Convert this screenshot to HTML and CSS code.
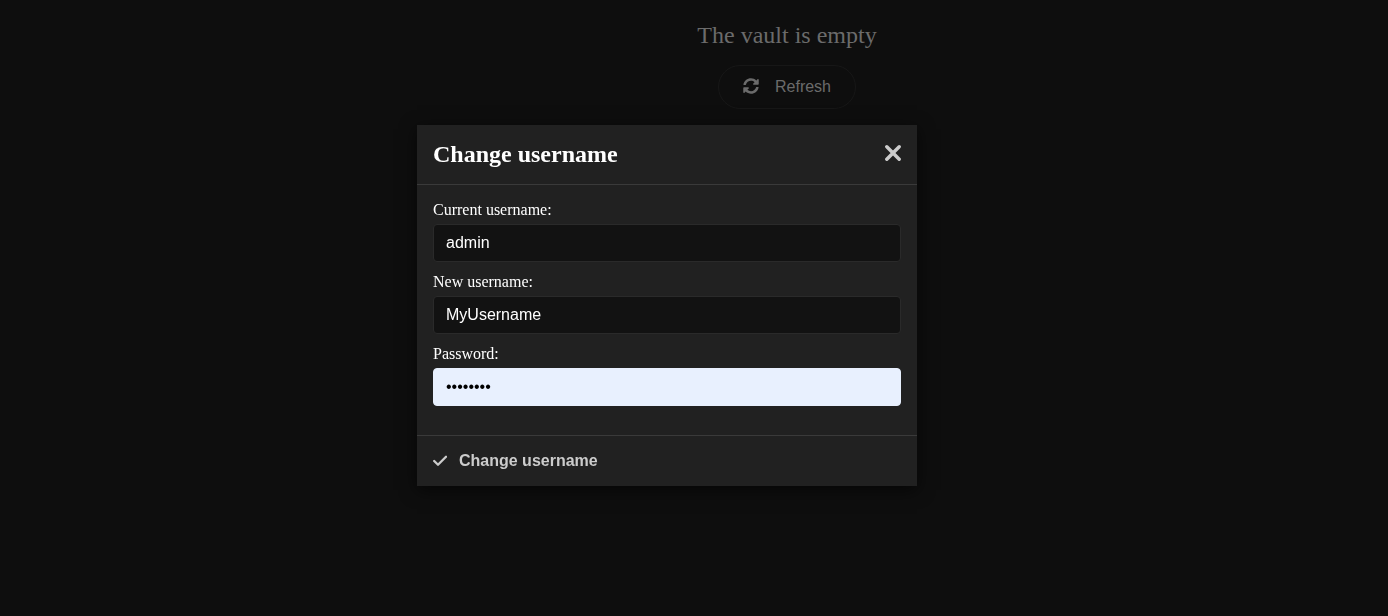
FILE: index.html
```html
<!DOCTYPE html>
<html lang="en">
<head>
<meta charset="utf-8">
<meta name="viewport" content="width=device-width, initial-scale=1">
<title>Vault</title>
<link rel="stylesheet" href="styles.css">
</head>
<body>
<main class="page">
  <h1 class="page-title">The vault is empty</h1>
  <button class="refresh" type="button">
    <svg class="refresh-icon" viewBox="0 0 512 512" aria-hidden="true"><path d="M370.72 133.28C339.458 104.008 298.888 87.962 255.848 88c-77.458.068-144.328 53.178-162.791 126.85-1.344 5.363-6.122 9.15-11.651 9.15H24.103c-7.498 0-13.194-6.807-11.807-14.176C33.933 94.924 134.813 8 256 8c66.448 0 126.791 26.136 171.315 68.685L463.03 40.97C478.149 25.851 504 36.559 504 57.941V192c0 13.255-10.745 24-24 24H345.941c-21.382 0-32.09-25.851-16.971-40.971l41.75-41.749zM32 296h134.059c21.382 0 32.09 25.851 16.971 40.971l-41.75 41.75c31.262 29.273 71.835 45.319 114.876 45.28 77.418-.07 144.315-53.144 162.787-126.849 1.344-5.363 6.122-9.15 11.651-9.15h57.304c7.498 0 13.194 6.807 11.807 14.176C478.067 417.076 377.187 504 256 504c-66.448 0-126.791-26.136-171.315-68.685L48.97 471.03C33.851 486.149 8 475.441 8 454.059V320c0-13.255 10.745-24 24-24z"/></svg>
    Refresh
  </button>
</main>
<div class="overlay">
  <form class="modal" role="dialog" aria-labelledby="modal-title">
    <header class="modal-header">
      <h2 class="modal-title" id="modal-title">Change username</h2>
      <button class="close" type="button" aria-label="Close">
        <svg class="close-icon" viewBox="0 0 20 20" aria-hidden="true"><path d="M3.8 3.8l12.400 12.400M16.200 3.800l-12.400 12.400"/></svg>
      </button>
    </header>
    <div class="modal-body">
      <div class="field">
        <label class="label" for="current">Current username:</label>
        <input class="input" id="current" type="text" value="admin" readonly>
      </div>
      <div class="field">
        <label class="label" for="new">New username:</label>
        <input class="input" id="new" type="text" value="MyUsername">
      </div>
      <div class="field">
        <label class="label" for="password">Password:</label>
        <input class="input input-filled" id="password" type="password" value="password">
      </div>
    </div>
    <footer class="modal-footer">
      <button class="submit" type="submit">
        <svg class="submit-icon" viewBox="0 0 14 16" aria-hidden="true"><path d="M1.200 8l3.800 3.800L13 3.800"/></svg>
        Change username
      </button>
    </footer>
  </form>
</div>
</body>
</html>
```
FILE: styles.css
```css
* {
  box-sizing: border-box;
}

body {
  margin: 0;
  background: #0e0e0e;
  color: #fff;
  font-family: "Liberation Serif", "Times New Roman", serif;
}

button,
input {
  font-family: "Liberation Sans", Arial, sans-serif;
  font-size: 16px;
}

button {
  border: 0;
  background: none;
  cursor: pointer;
}

.page {
  display: flex;
  flex-direction: column;
  align-items: center;
  gap: 16px;
  padding: 21px 54px 0 240px;
}

.page-title {
  margin: 0;
  color: #6b6b6b;
  font-size: 24px;
  font-weight: 400;
  line-height: 28px;
}

.refresh {
  display: flex;
  align-items: center;
  gap: 16px;
  height: 44px;
  padding: 0 24px;
  border: 1px solid #171717;
  border-radius: 22px;
  color: #6b6b6b;
}

.refresh-icon {
  width: 16px;
  height: 16px;
  margin-bottom: 2px;
  fill: currentColor;
}

.overlay {
  position: fixed;
  inset: 0;
  display: flex;
  align-items: center;
  justify-content: center;
  padding: 0 54px 5px 0;
}

.modal {
  width: 500px;
  max-width: 100%;
  background: #212121;
  box-shadow: 0 4px 16px rgba(0, 0, 0, 0.6);
}

.modal-header {
  display: flex;
  align-items: flex-start;
  justify-content: space-between;
  padding: 15px 14px 16px 16px;
  border-bottom: 1px solid #3a3a3a;
}

.modal-title {
  margin: 0;
  font-size: 24px;
  line-height: 28px;
}

.close {
  display: flex;
  padding: 3px 0;
  color: #ccc;
}

.close-icon {
  width: 20px;
  height: 20px;
  fill: none;
  stroke: currentColor;
  stroke-width: 3.4;
  stroke-linecap: round;
}

.modal-body {
  display: flex;
  flex-direction: column;
  gap: 11px;
  padding: 16px 16px 29px;
}

.label {
  display: block;
  margin-bottom: 5px;
  font-size: 16px;
  line-height: 18px;
}

.input {
  display: block;
  width: 100%;
  height: 38px;
  padding: 0 12px;
  border: 1px solid #2a2a2a;
  border-radius: 4px;
  background: #121212;
  color: #fff;
}

.input-filled {
  border-color: #e8f0fe;
  background: #e8f0fe;
  color: #000;
}

.modal-footer {
  padding: 16px;
  border-top: 1px solid #3a3a3a;
}

.submit {
  display: flex;
  align-items: center;
  gap: 12px;
  padding: 0;
  color: #ccc;
  font-weight: 700;
  line-height: 18px;
}

.submit-icon {
  width: 14px;
  height: 16px;
  fill: none;
  stroke: currentColor;
  stroke-width: 2.3;
  stroke-linecap: round;
  stroke-linejoin: round;
}
```
